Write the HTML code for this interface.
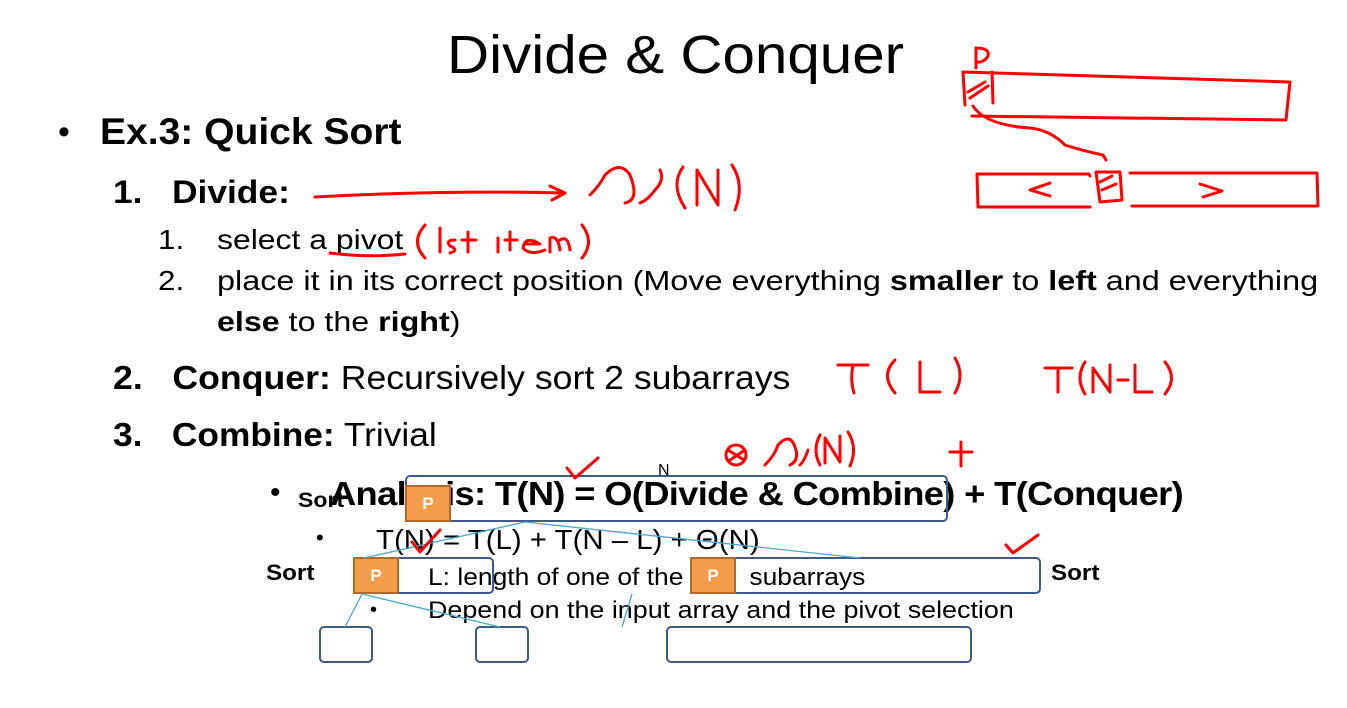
<!DOCTYPE html>
<html><head><meta charset="utf-8"><style>
body{margin:0;width:1347px;height:708px;background:#fff;position:relative;overflow:hidden;font-family:"Liberation Sans",sans-serif;color:#000}
.t{position:absolute;white-space:nowrap;line-height:1;transform-origin:0 50%}
b{font-weight:bold}
.box{position:absolute;border:2px solid #3d5a8a;border-radius:5px;box-sizing:border-box}
.p{position:absolute;background:#f39c4c;border:2px solid #b8672a;box-sizing:border-box;color:#fff;font-weight:bold;font-size:17px;display:flex;align-items:center;justify-content:center}
</style></head><body>
<div class="t" style="left:447px;top:28px;font-size:54px;transform:scaleX(1.08)">Divide &amp; Conquer</div>
<div class="t" style="left:58px;top:115px;font-size:34px">•</div>
<div class="t" style="left:100px;top:113px;font-size:37px;font-weight:bold;transform:scaleX(1.055)">Ex.3: Quick Sort</div>
<div class="t" style="left:113px;top:176px;font-size:32px;font-weight:bold;transform:scaleX(1.105)">1.&nbsp;&nbsp;&nbsp;Divide:</div>
<div class="t" style="left:158px;top:226px;font-size:28px;transform:scaleX(1.12)">1.</div>
<div class="t" style="left:217px;top:226px;font-size:28px;transform:scaleX(1.14)">select a pivot</div>
<div class="t" style="left:158px;top:267px;font-size:28px;transform:scaleX(1.12)">2.</div>
<div class="t" style="left:217px;top:267px;font-size:28px;transform:scaleX(1.156)">place it in its correct position (Move everything <b>smaller</b> to <b>left</b> and everything</div>
<div class="t" style="left:217px;top:308px;font-size:28px;transform:scaleX(1.15)"><b>else</b> to the <b>right</b>)</div>
<div class="t" style="left:113px;top:361px;font-size:33px;transform:scaleX(1.08)"><b>2.&nbsp;&nbsp;&nbsp;Conquer:</b> Recursively sort 2 subarrays</div>
<div class="t" style="left:113px;top:418px;font-size:33px;transform:scaleX(1.07)"><b>3.&nbsp;&nbsp;&nbsp;Combine:</b> Trivial</div>
<div class="t" style="left:298px;top:490px;font-size:21px;font-weight:bold;transform:scaleX(1.1)">Sort</div>
<div class="t" style="left:270px;top:478px;font-size:30px">•</div>
<div class="t" style="left:330px;top:477px;font-size:33px;font-weight:bold;letter-spacing:-0.6px;transform:scaleX(1.1)">Analysis: T(N) = O(Divide &amp; Combine) + T(Conquer)</div>
<div class="t" style="left:658px;top:463px;font-size:16px">N</div>
<div class="t" style="left:316px;top:527px;font-size:22px">•</div>
<div class="t" style="left:376px;top:526px;font-size:28px;transform:scaleX(1.05)">T(N) = T(L) + T(N – L) + Θ(N)</div>
<div class="t" style="left:266px;top:562px;font-size:22px;font-weight:bold;transform:scaleX(1.1)">Sort</div>
<div class="t" style="left:1051px;top:562px;font-size:22px;font-weight:bold;transform:scaleX(1.1)">Sort</div>
<div class="t" style="left:428px;top:566px;font-size:24px;transform:scaleX(1.1)">L: length of one of the&nbsp;&nbsp;&nbsp;&nbsp;&nbsp;&nbsp;&nbsp;&nbsp;&nbsp;subarrays</div>
<div class="t" style="left:370px;top:600px;font-size:20px">•</div>
<div class="t" style="left:428px;top:599px;font-size:24px;transform:scaleX(1.12)">Depend on the input array and the pivot selection</div>
<div class="box" style="left:405px;top:475px;width:543px;height:47px"></div>
<div class="p" style="left:405px;top:485px;width:46px;height:37px">P</div>
<div class="box" style="left:353px;top:557px;width:141px;height:37px"></div>
<div class="p" style="left:353px;top:557px;width:46px;height:37px">P</div>
<div class="box" style="left:690px;top:557px;width:351px;height:37px"></div>
<div class="p" style="left:690px;top:557px;width:46px;height:37px">P</div>
<div class="box" style="left:319px;top:626px;width:54px;height:37px"></div>
<div class="box" style="left:475px;top:626px;width:54px;height:37px"></div>
<div class="box" style="left:666px;top:626px;width:306px;height:37px"></div>
<svg width="1347" height="708" style="position:absolute;left:0;top:0" fill="none">
<g stroke="#4aa8c8" stroke-width="1.3">
<path d="M525 522L364 558M525 522L860 558M362 594L345 627M362 594L500 627M632 594L622 627"/>
</g>
<g stroke="#f00" stroke-width="3" stroke-linecap="round" stroke-linejoin="round">
<path d="M976 68V48Q990 48 988 56Q984 63 976 62"/>
<path d="M963 72L1290 82L1286 120L972 116M963 72L965 105M992 72L993 103M968 92L985 82M970 98L988 86"/>
<path d="M973 106Q985 125 1030 128Q1050 130 1065 145Q1080 150 1103 155L1106 160"/>
<path d="M977 174H1089L1090 176M977 174L978 207H1090M1096 172H1120L1122 200L1100 202L1096 172M1100 182L1112 176M1102 190L1116 184M1130 173H1317L1318 206H1132"/>
<path d="M1050 183L1030 190L1050 196M1200 184L1222 191L1203 197"/>
<path d="M315 197Q440 190 563 193M550 186L565 193L552 200"/>
<path d="M590 195Q600 185 605 175Q620 160 630 175Q640 200 625 203M640 203Q648 200 655 190Q665 180 660 170"/>
<path d="M683 167Q670 185 685 208M697 205V170L718 205V170M732 165Q745 185 735 210"/>
<path d="M330 253Q370 258 405 254"/>
<path d="M425 225Q410 242 425 258M440 228V252M455 240Q445 240 450 246Q460 250 450 253M468 232L468 252M462 240H476M498 238V252M510 232V250M505 240H517M525 244H540Q525 235 523 248Q530 256 545 250M550 252V238Q558 235 560 250M560 240Q568 235 570 250M582 225Q595 242 582 258"/>
<path d="M838 365H868M853 365Q850 380 854 393M895 360Q880 375 895 393M920 362V392H940M955 358Q965 375 955 393"/>
<path d="M1045 368H1072M1058 368V392M1085 362Q1075 378 1085 394M1093 392V368L1110 392V365M1118 380H1128M1135 365V392H1152M1165 362Q1178 378 1165 394"/>
<path d="M726 455A10 10 0 1 0 746 455A10 10 0 1 0 726 455M728 450L744 460M730 460L745 450"/>
<path d="M765 465Q775 455 778 445Q790 432 795 447Q800 460 790 465M800 465Q805 460 808 450"/>
<path d="M820 435Q812 450 820 465M825 463V438L840 462V436M848 432Q858 448 850 466"/>
<path d="M950 452H972M961 442V466"/>
<path d="M567 468L575 478L598 458"/>
<path d="M412 542L420 552L440 530"/>
<path d="M1006 545L1013 553L1038 535"/>
</g>
</svg>
</body></html>
